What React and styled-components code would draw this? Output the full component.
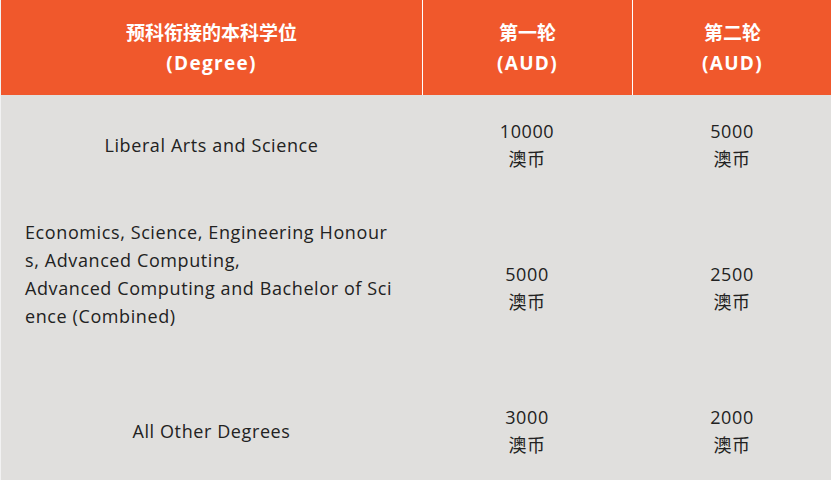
import React from 'react';
import styled, { createGlobalStyle } from 'styled-components';

const GlobalStyle = createGlobalStyle`
  body {
    margin: 0;
    background: #e0dfdd;
    font-family: "Open Sans", "Noto Sans CJK SC", sans-serif;
  }
`;

const Table = styled.div`
  display: grid;
  grid-template-columns: 421px 210px 200px;
  width: 831px;
  background: #e0dfdd;
  border-left: 1px solid #f2f2f2;
  box-sizing: border-box;
`;

const HeadCell = styled.div`
  background: #f0582c;
  color: #fff;
  font-weight: 700;
  font-size: 19px;
  line-height: 30px;
  height: 95px;
  box-sizing: border-box;
  display: flex;
  flex-direction: column;
  align-items: center;
  justify-content: center;
  text-align: center;
  border-left: ${(p) => (p.$divider ? '1px solid #fff' : 'none')};
`;

const HeadLine = styled.span`
  letter-spacing: ${(p) => (p.$latin ? '1.3px' : '0')};
`;

const Cell = styled.div`
  color: #222;
  font-size: 18px;
  letter-spacing: 0.6px;
  line-height: 28px;
  padding: ${(p) => (p.$tall ? '23px 24px' : '22px 24px')};
  display: flex;
  flex-direction: column;
  justify-content: center;
  align-items: ${(p) => (p.$left ? 'flex-start' : 'center')};
  text-align: ${(p) => (p.$left ? 'left' : 'center')};
`;

const Line = styled.span`
  display: block;
  min-height: 28px;
  white-space: nowrap;
`;

const rows = [
  { degree: ['Liberal Arts and Science'], first: '10000', second: '5000' },
  {
    degree: [
      'Economics, Science, Engineering Honour',
      's, Advanced Computing,',
      'Advanced Computing and Bachelor of Sci',
      'ence (Combined)',
      '',
    ],
    left: true,
    first: '5000',
    second: '2500',
  },
  { degree: ['All Other Degrees'], first: '3000', second: '2000' },
];

const heads = [
  ['预科衔接的本科学位', '(Degree)'],
  ['第一轮', '(AUD)'],
  ['第二轮', '(AUD)'],
];

const App = () => (
  <>
    <GlobalStyle />
    <Table>
      {heads.map(([zh, en], i) => (
        <HeadCell key={i} $divider={i > 0}>
          <HeadLine>{zh}</HeadLine>
          <HeadLine $latin>{en}</HeadLine>
        </HeadCell>
      ))}
      {rows.map((r, i) => (
        <React.Fragment key={i}>
          <Cell $left={r.left} $tall={r.left}>
            {r.degree.map((l, j) => (
              <Line key={j}>{l}</Line>
            ))}
          </Cell>
          <Cell>
            <Line>{r.first}</Line>
            <Line>澳币</Line>
          </Cell>
          <Cell>
            <Line>{r.second}</Line>
            <Line>澳币</Line>
          </Cell>
        </React.Fragment>
      ))}
    </Table>
  </>
);

export default App;
